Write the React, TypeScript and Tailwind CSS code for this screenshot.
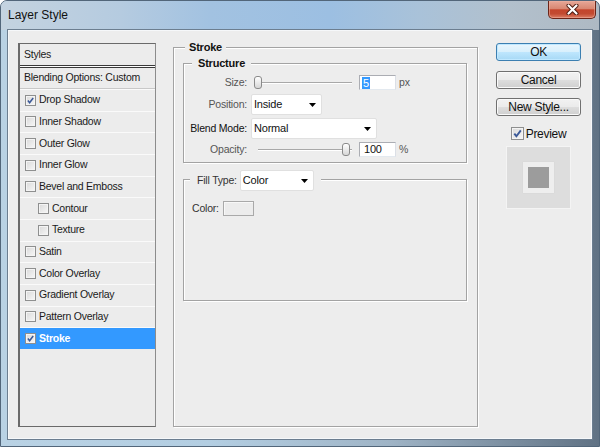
import React from "react";

type StyleItem = { name: string; on?: boolean; sub?: boolean; active?: boolean };

const styleItems: StyleItem[] = [
  { name: "Drop Shadow", on: true },
  { name: "Inner Shadow" },
  { name: "Outer Glow" },
  { name: "Inner Glow" },
  { name: "Bevel and Emboss" },
  { name: "Contour", sub: true },
  { name: "Texture", sub: true },
  { name: "Satin" },
  { name: "Color Overlay" },
  { name: "Gradient Overlay" },
  { name: "Pattern Overlay" },
  { name: "Stroke", on: true, active: true },
];

function Check({ on, big }: { on?: boolean; big?: boolean }) {
  return (
    <span
      className={
        (big ? "size-[13px] " : "size-[11px] ") +
        "flex shrink-0 items-center justify-center border border-[#8e8f8f] bg-[linear-gradient(135deg,#d9d9d9,#f7f7f7)] shadow-[inset_0_0_0_1px_#f4f4f4]"
      }
    >
      {on && (
        <svg viewBox="0 0 11 11" className="size-full">
          <path d="M2.3 5.6 L4.4 8.2 L8.8 2.4" fill="none" stroke="#3b5998" strokeWidth="1.9" />
        </svg>
      )}
    </span>
  );
}

function Slider({ at }: { at: "start" | "end" }) {
  return (
    <div className="relative ml-[3px] h-[15px] w-[98px]">
      <div className="absolute top-[7px] left-[4px] right-0 h-[2px] border-t border-[#a8a8a8] bg-white" />
      <div
        className={
          (at === "start" ? "left-0 " : "right-[2px] ") +
          "absolute top-[1px] h-[13px] w-[8px] rounded-[3px] border border-[#8a8a8a] bg-[linear-gradient(180deg,#ffffff,#d6d6d6)]"
        }
      />
    </div>
  );
}

function Field({ children }: { children: React.ReactNode }) {
  return (
    <div className="ml-[7px] flex h-[15px] w-[37px] items-center border border-[#abadb3] border-r-[#dbdfe6] border-b-[#e3e9ef] bg-white pl-[2px] text-[11px] text-[#111]">
      {children}
    </div>
  );
}

function Select({ value, w }: { value: string; w: string }) {
  return (
    <div
      className={
        w +
        " flex h-[21px] items-center justify-between rounded-[2px] border border-[#e0e0e0] bg-white pr-[5px] pl-[2px] text-[11px] tracking-[-0.2px] text-[#111]"
      }
    >
      <span>{value}</span>
      <svg width="7" height="4" viewBox="0 0 7 4">
        <path d="M0 0 H7 L3.5 4 Z" fill="#000" />
      </svg>
    </div>
  );
}

function Label({ text, dark }: { text: string; dark?: boolean }) {
  return (
    <span
      className={
        "ml-[7px] flex w-[56px] justify-end whitespace-nowrap " + (dark ? "text-[#111]" : "text-[#555]")
      }
    >
      {text}
    </span>
  );
}

export default function App() {
  return (
    <div className="h-[447px] w-[600px] overflow-hidden bg-white font-['Liberation_Sans',Arial,sans-serif]">
      <div className="flex h-full w-full flex-col rounded-t-[7px] border border-[#52667a] bg-[linear-gradient(90deg,#b9d2e4_0%,#b3cee2_35%,#9fb4c6_65%,#607284_100%)]">
        {/* title bar */}
        <div className="flex h-[29px] shrink-0 items-start justify-between rounded-t-[6px] bg-[linear-gradient(90deg,#c4d3e0_0%,#b5cbe0_20%,#a2c2e1_35%,#9cbfe2_55%,#a9c2d9_70%,#b2c0cc_85%,#aeb9c3_100%)] pl-[7px]">
          <span className="mt-[7px] text-[12px] leading-[14px] text-[#111]">Layer Style</span>
          <div className="mr-[3px] flex h-[18px] w-[48px] items-center justify-center rounded-b-[5px] border border-t-0 border-[#6b2418] bg-[linear-gradient(180deg,#e7a898_0%,#d88772_45%,#c4452c_52%,#c24a31_75%,#dc7d64_100%)] shadow-[inset_0_0_0_1px_#eeb2a288]">
            <svg width="13" height="11" viewBox="0 0 13 11">
              <path d="M2.5 1.5 L10.5 9.5 M10.5 1.5 L2.5 9.5" stroke="#4a1a10" strokeWidth="4" strokeLinecap="round" />
              <path d="M2.5 1.5 L10.5 9.5 M10.5 1.5 L2.5 9.5" stroke="#fff" strokeWidth="2.2" strokeLinecap="round" />
            </svg>
          </div>
        </div>

        {/* client area */}
        <div className="mx-[7px] mb-[7px] flex flex-1 border border-[#f6f8fa] bg-[#ededed] pt-[12px] pl-[9px] shadow-[0_0_0_1px_#6c7e90]">
          {/* styles list */}
          <div className="flex h-[384px] w-[138px] shrink-0 flex-col border-t border-r border-b border-l-2 border-[#6a6a6a] border-r-[#8c8c8c] bg-[#ececec] text-[10.5px] tracking-[-0.25px] text-[#1a1a1a]">
            <div className="flex h-[21px] items-center pl-[4px]">Styles</div>
            <div className="h-[3px] border-y border-[#3a3a3a] bg-white" />
            <div className="flex h-[21px] items-center border-b border-[#c8c8c8] pl-[4px]">Blending Options: Custom</div>
            {styleItems.map((s) => (
              <div
                key={s.name}
                className={
                  "flex h-[21.67px] items-center gap-[3px] border-t border-[#fafafa] " +
                  (s.sub ? "pl-[18px] " : "pl-[5px] ") +
                  (s.active ? "bg-[#3399ff] font-bold text-white" : "")
                }
              >
                <Check on={s.on} />
                <span>{s.name}</span>
              </div>
            ))}
          </div>

          {/* Stroke group */}
          <div className="relative mt-[4px] ml-[17px] h-[380px] w-[305px] shrink-0 border border-[#a3a3a3] shadow-[inset_1px_1px_0_#fff,1px_1px_0_#fff]">
            <div className="absolute -top-[8px] left-[11px] bg-[#ededed] px-[4px] text-[11px] leading-[14px] font-bold tracking-[-0.2px] text-[#111]">
              Stroke
            </div>

            {/* Structure */}
            <div className="relative mt-[15px] ml-[9px] flex h-[100px] w-[284px] flex-col border border-[#a3a3a3] shadow-[inset_1px_1px_0_#fff,1px_1px_0_#fff]">
              <div className="absolute -top-[8px] left-[8px] bg-[#ededed] px-[6px] text-[11px] leading-[14px] font-bold tracking-[-0.2px] text-[#111]">
                Structure
              </div>

              <div className="mt-[11px] flex h-[15px] items-center text-[10.5px] tracking-[-0.2px]">
                <Label text="Size:" />
                <div className="ml-[4px] flex items-center">
                  <Slider at="start" />
                  <Field>
                    <span className="bg-[#3399ff] px-[1px] leading-[12px] text-white">5</span>
                  </Field>
                  <span className="ml-[3px] text-[#555]">px</span>
                </div>
              </div>

              <div className="mt-[4px] flex h-[21px] items-center text-[10.5px] tracking-[-0.2px]">
                <Label text="Position:" />
                <div className="ml-[4px]">
                  <Select value="Inside" w="w-[71px]" />
                </div>
              </div>

              <div className="mt-[3px] flex h-[21px] items-center text-[10.5px] tracking-[-0.2px]">
                <Label text="Blend Mode:" dark />
                <div className="ml-[4px]">
                  <Select value="Normal" w="w-[126px]" />
                </div>
              </div>

              <div className="mt-[3px] flex h-[15px] items-center text-[10.5px] tracking-[-0.2px]">
                <Label text="Opacity:" />
                <div className="ml-[4px] flex items-center">
                  <Slider at="end" />
                  <Field>
                    <span className="pl-[2px]">100</span>
                  </Field>
                  <span className="ml-[3px] text-[#555]">%</span>
                </div>
              </div>
            </div>

            {/* Fill */}
            <div className="relative mt-[16px] ml-[9px] h-[122px] w-[284px] border border-[#a3a3a3] shadow-[inset_1px_1px_0_#fff,1px_1px_0_#fff]">
              <div className="absolute -top-[10px] left-[6px] flex h-[21px] items-center gap-[3px] bg-[#ededed] px-[7px] text-[10.5px] tracking-[-0.2px]">
                <span className="text-[#333]">Fill Type:</span>
                <Select value="Color" w="w-[74px]" />
              </div>
              <div className="mt-[21px] ml-[8px] flex items-center gap-[3px] text-[10.5px] tracking-[-0.2px] text-[#333]">
                <span className="w-[28px]">Color:</span>
                <div className="h-[15px] w-[31px] border border-[#a9a9a9] bg-[#ececec] shadow-[inset_1px_1px_0_#f8f8f8]" />
              </div>
            </div>
          </div>

          {/* buttons */}
          <div className="ml-[18px] flex w-[85px] shrink-0 flex-col items-center text-[12px] tracking-[-0.3px] text-[#111]">
            <div className="flex h-[18px] w-full items-center justify-center rounded-[3px] border border-[#3c7fb1] bg-[linear-gradient(180deg,#eaf6fd_0%,#d9f0fc_48%,#bee6fd_52%,#a7d9f5_100%)] shadow-[inset_0_0_0_1px_#c0e8ff]">
              OK
            </div>
            <div className="mt-[10px] flex h-[18px] w-full items-center justify-center rounded-[3px] border border-[#707070] bg-[linear-gradient(180deg,#f2f2f2_0%,#ebebeb_48%,#dddddd_52%,#cfcfcf_100%)] shadow-[inset_0_0_0_1px_#fafafa]">
              Cancel
            </div>
            <div className="mt-[9px] flex h-[18px] w-full items-center justify-center rounded-[3px] border border-[#707070] bg-[linear-gradient(180deg,#f2f2f2_0%,#ebebeb_48%,#dddddd_52%,#cfcfcf_100%)] shadow-[inset_0_0_0_1px_#fafafa]">
              New Style...
            </div>
            <div className="mt-[11px] flex h-[13px] items-center gap-[2px]">
              <Check on big />
              <span>Preview</span>
            </div>
            <div className="mt-[6px] flex h-[63px] w-[65px] items-center justify-center border border-[#f4f4f4] bg-[#dddddd]">
              <div className="flex size-[31px] items-center justify-center bg-[#eeeeee] shadow-[0_0_1px_#cfcfcf]">
                <div className="size-[21px] bg-[#9c9c9c]" />
              </div>
            </div>
          </div>
        </div>
      </div>
    </div>
  );
}
